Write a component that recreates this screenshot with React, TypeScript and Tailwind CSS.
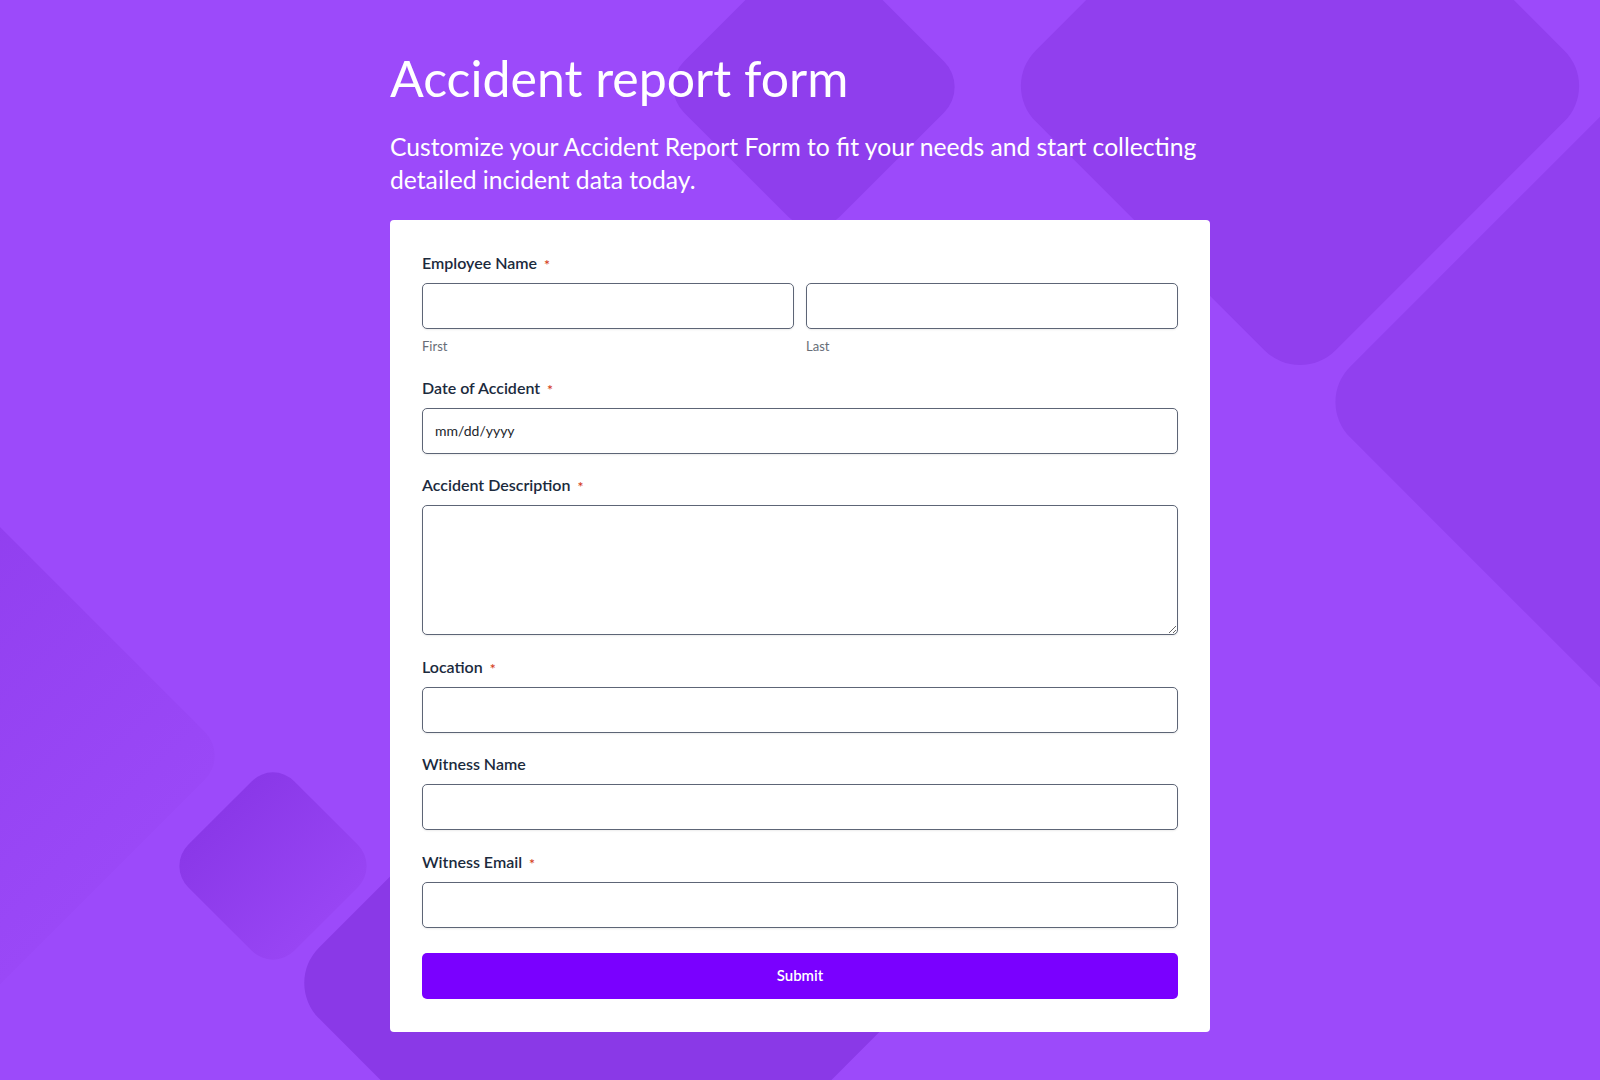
import React from 'react';

/* Decorative background: rotated rounded squares */
function Backdrop() {
  return (
    <svg
      className="absolute inset-0 h-full w-full"
      viewBox="0 0 1600 1080"
      preserveAspectRatio="none"
      aria-hidden="true"
    >
      <defs>
        <linearGradient id="fadeLeft" x1="0" y1="0" x2="1" y2="0">
          <stop offset="0" stopColor="#8e3cec" />
          <stop offset="1" stopColor="#9a48f7" />
        </linearGradient>
        <linearGradient id="small" x1="0" y1="0" x2="1" y2="0">
          <stop offset="0" stopColor="#8a38e8" />
          <stop offset="1" stopColor="#9845f4" />
        </linearGradient>
      </defs>
      <rect width="1600" height="1080" fill="#9c4afa" />
      {/* top centre */}
      <rect x={814 - 110} y={87 - 110} width="220" height="220" rx="36" fill="#8f3eed" transform="rotate(45 814 87)" />
      {/* top right */}
      <rect x={1300 - 212} y={86 - 212} width="424" height="424" rx="50" fill="#913fee" transform="rotate(45 1300 86)" />
      {/* right */}
      <rect x={1640 - 230} y={402 - 230} width="460" height="460" rx="50" fill="#9140ef" transform="rotate(45 1640 402)" />
      {/* left */}
      <rect x={-100 - 232} y={755 - 232} width="465" height="465" rx="34" fill="url(#fadeLeft)" transform="rotate(45 -100 755)" />
      {/* small left */}
      <rect x={273 - 75} y={866 - 75} width="150" height="150" rx="30" fill="url(#small)" transform="rotate(45 273 866)" />
      {/* bottom */}
      <rect x={606 - 228} y={983 - 228} width="456" height="456" rx="50" fill="#8a39e7" transform="rotate(45 606 983)" />
    </svg>
  );
}

type FieldProps = {
  label: string;
  required?: boolean;
  children: React.ReactNode;
};

function Field({ label, required, children }: FieldProps) {
  return (
    <div className="flex flex-col">
      <label className="flex h-6 items-center text-[16px] font-semibold text-[#1b2a3d]">
        {label}
        {required && (
          <span className="ml-[7px] translate-y-[2px] text-[14px] leading-none text-[#d4401c]">*</span>
        )}
      </label>
      <div className="mt-2">{children}</div>
    </div>
  );
}

const inputClass =
  'block h-[46px] w-full rounded-[5px] border border-[#5d6576] bg-white px-3 text-[14px] text-[#22262c] shadow-[0_1px_2px_rgba(0,0,0,0.08)] outline-none';

export default function App() {
  return (
    <div className="relative min-h-screen overflow-hidden font-['Lato','Noto_Sans',sans-serif]">
      <Backdrop />

      <main className="relative mx-auto w-[820px] pt-[48px] pb-12">
        {/* Heading */}
        <h1 className="text-[50px] font-normal leading-[1.2] text-white">Accident report form</h1>
        <p className="mt-[22px] text-[24.7px] font-normal leading-[33.3px] text-white">
          Customize your Accident Report Form to fit your needs and start collecting detailed incident data today.
        </p>

        {/* Form card */}
        <form
          className="mt-[23px] flex flex-col rounded-[4px] bg-white px-8 pt-[31px] pb-[33px]"
          onSubmit={(e) => e.preventDefault()}
        >
          <Field label="Employee Name" required>
            <div className="grid grid-cols-2 gap-3">
              <div>
                <input className={inputClass} />
                <div className="mt-[9px] text-[13px] leading-4 text-[#676d77]">First</div>
              </div>
              <div>
                <input className={inputClass} />
                <div className="mt-[9px] text-[13px] leading-4 text-[#676d77]">Last</div>
              </div>
            </div>
          </Field>

          <div className="mt-[22px]">
            <Field label="Date of Accident" required>
              <input className={`${inputClass} placeholder:text-[#22262c]`} placeholder="mm/dd/yyyy" />
            </Field>
          </div>

          <div className="mt-[19.5px]">
            <Field label="Accident Description" required>
              <textarea className="block h-[130px] w-full resize-y rounded-[5px] border border-[#5d6576] bg-white px-3 py-2 text-[14px] shadow-[0_1px_2px_rgba(0,0,0,0.08)] outline-none" />
            </Field>
          </div>

          <div className="mt-[19.5px]">
            <Field label="Location" required>
              <input className={inputClass} />
            </Field>
          </div>

          <div className="mt-[19.5px]">
            <Field label="Witness Name">
              <input className={inputClass} />
            </Field>
          </div>

          <div className="mt-[19.5px]">
            <Field label="Witness Email" required>
              <input type="email" className={inputClass} />
            </Field>
          </div>

          <button
            type="submit"
            className="mt-[25px] h-[46px] w-full rounded-[5px] bg-[#7a00ff] text-[15px] font-semibold text-white"
          >
            Submit
          </button>
        </form>
      </main>
    </div>
  );
}
